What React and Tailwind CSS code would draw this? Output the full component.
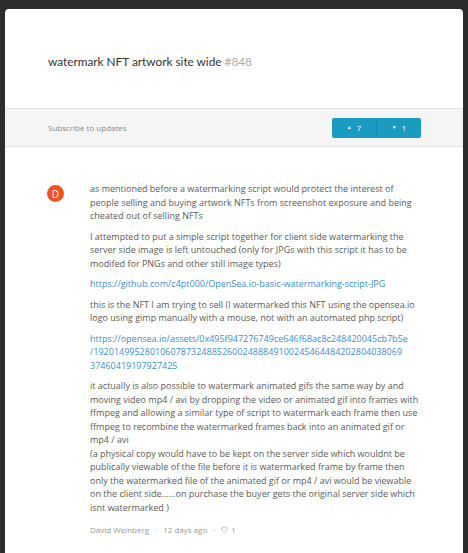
import React from 'react';
import { Heart } from 'lucide-react';

const body = { fontFamily: '"Open Sans", "Noto Sans", sans-serif' };

const Lines = ({ lines, className = '' }) => (
  <p className={className}>
    {lines.map((l, i) => (
      <span key={i} className="block whitespace-nowrap">
        {l}
      </span>
    ))}
  </p>
);

export default function App() {
  return (
    <div className="min-h-screen bg-[#2d2d2d] px-[5px] pt-[9px]" style={body}>
      <div className="min-h-[544px] rounded-t-[4px] bg-white">
        {/* Title */}
        <div className="h-[99px] px-[43px] pt-[45px]">
          <h1 className="text-[11.8px] leading-[16px] text-[#333]" style={{ fontFamily: 'Lato, sans-serif' }}>
            watermark NFT artwork site wide <span className="text-[#aaa]">#848</span>
          </h1>
        </div>

        {/* Subscribe bar */}
        <div className="flex h-[39px] items-center justify-between border-y border-[#e2e2e2] bg-[#f5f5f5] pl-[43px] pr-[42px]">
          <span className="text-[8px] text-[#8a8a8a]">Subscribe to updates</span>
          <div className="flex h-[20px] w-[89px] overflow-hidden rounded-[2px] bg-[#1a9bc2] text-[8px] text-white">
            <button className="flex w-[45px] items-center justify-center gap-[5px] border-r border-[#168aad]">
              <span className="text-[5px]">▲</span>7
            </button>
            <button className="flex flex-1 items-center justify-center gap-[5px]">
              <span className="text-[5px]">▼</span>1
            </button>
          </div>
        </div>

        {/* Comment */}
        <div className="flex pl-[42px] pr-[30px] pt-[38px]">
          <div className="flex h-[17px] w-[17px] shrink-0 items-center justify-center rounded-full bg-[#f4511e] text-[10px] leading-none text-white">
            D
          </div>
          <div className="ml-[26px] text-[9px] leading-[13.5px] text-[#5c5c5c]">
            <Lines
              className="-mt-[3px]"
              lines={[
                'as mentioned before a watermarking script would protect the interest of',
                'people selling and buying artwork NFTs from screenshot exposure and being',
                'cheated out of selling NFTs',
              ]}
            />
            <Lines
              className="mt-[7px]"
              lines={[
                'I attempted to put a simple script together for client side watermarking the',
                'server side image is left untouched (only for JPGs with this script it has to be',
                'modifed for PNGs and other still image types)',
              ]}
            />
            <p className="mt-[7px] text-[#3d8fd8]">https://github.com/c4pt000/OpenSea.io-basic-watermarking-script-JPG</p>
            <Lines
              className="mt-[7px]"
              lines={[
                'this is the NFT I am trying to sell (I watermarked this NFT using the opensea.io',
                'logo using gimp manually with a mouse, not with an automated php script)',
              ]}
            />
            <Lines
              className="mt-[7px] text-[#3d8fd8]"
              lines={[
                'https://opensea.io/assets/0x495f947276749ce646f68ac8c248420045cb7b5e',
                '/192014995280106078732488526002488849100245464484202804038069',
                '37460419197927425',
              ]}
            />
            <Lines
              className="mt-[7px]"
              lines={[
                'it actually is also possible to watermark animated gifs the same way by and',
                'moving video mp4 / avi by dropping the video or animated gif into frames with',
                'ffmpeg and allowing a similar type of script to watermark each frame then use',
                'ffmpeg to recombine the watermarked frames back into an animated gif or',
                'mp4 / avi',
                '(a physical copy would have to be kept on the server side which wouldnt be',
                'publically viewable of the file before it is watermarked frame by frame then',
                'only the watermarked file of the animated gif or mp4 / avi would be viewable',
                'on the client side……on purchase the buyer gets the original server side which',
                'isnt watermarked )',
              ]}
            />
            <div className="mt-[9px] flex items-center gap-[6px] text-[8px] text-[#999]">
              <span>David Weinberg</span>
              <span>·</span>
              <span>12 days ago</span>
              <span>·</span>
              <span className="flex items-center gap-[3px]">
                <Heart size={7} strokeWidth={2} />1
              </span>
            </div>
          </div>
        </div>
      </div>
    </div>
  );
}
